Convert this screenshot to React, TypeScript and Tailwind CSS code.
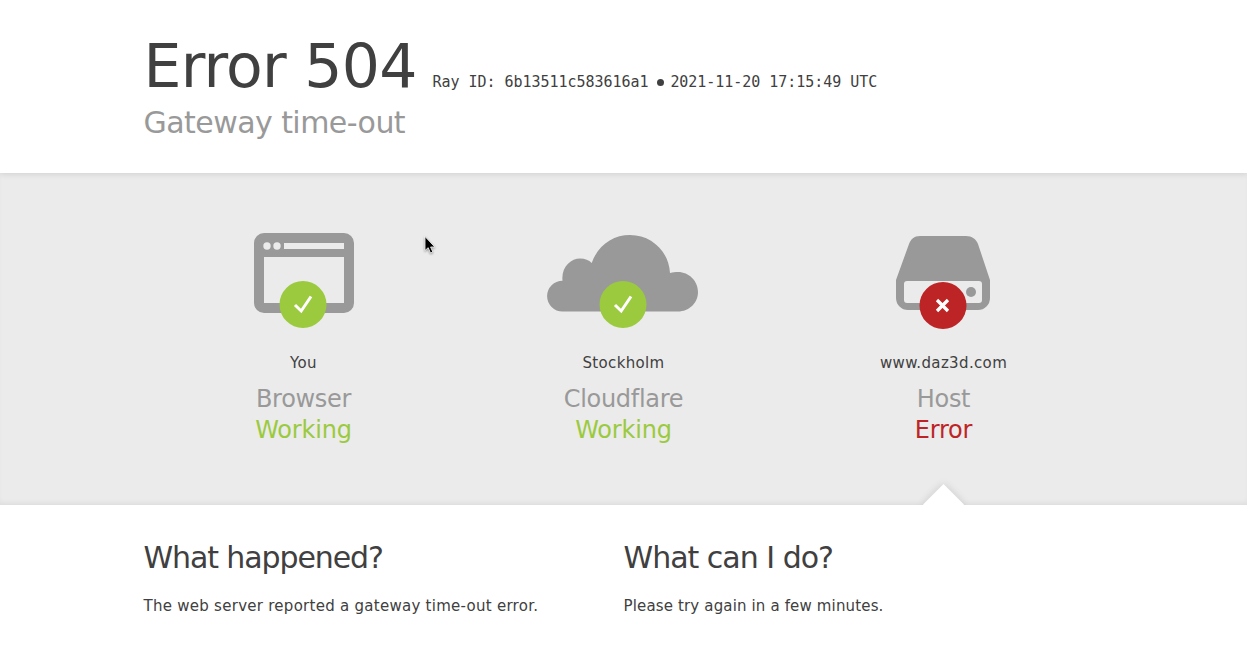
import React from "react";

const sans = "font-['DejaVu_Sans',sans-serif]";

function Badge({ ok }: { ok: boolean }) {
  return (
    <div className={"absolute left-1/2 h-[47px] w-[47px] -translate-x-1/2 rounded-full flex items-center justify-center " + (ok ? "top-[48px] bg-[#9bca3e]" : "top-[49px] bg-[#bd2426]")}>
      <svg width="47" height="47" viewBox="0 0 47 47">
        {ok ? (
          <path d="M15.500 24 L21.700 30 L31.500 15.500" fill="none" stroke="#fff" strokeWidth="3" />
        ) : (
          <path d="M17.500 18 L28.500 29 M28.500 18 L17.500 29" fill="none" stroke="#fff" strokeWidth="3.300" />
        )}
      </svg>
    </div>
  );
}

function BrowserIcon() {
  return (
    <svg className="translate-x-[1px]" width="100" height="80" viewBox="0 0 100 80">
      <path fillRule="evenodd" fill="#999" d="M10 0H90A10 10 0 0 1 100 10V70A10 10 0 0 1 90 80H10A10 10 0 0 1 0 70V10A10 10 0 0 1 10 0ZM10 24V70H90V24Z" />
      <circle cx="13" cy="13" r="3.700" fill="#ebebeb" />
      <circle cx="23" cy="13" r="3.700" fill="#ebebeb" />
      <rect x="30" y="10" width="60" height="6" fill="#ebebeb" />
    </svg>
  );
}

function CloudIcon() {
  return (
    <svg width="151" height="77" viewBox="0 0 151 77">
      <path fill="#999" d="M21 76.500H15.500A15.400 15.400 0 0 1 15.500 45.700C14 32 24 23.500 33 23.500C38 23.500 42 25 44.700 28C51 10 66 0 83 0C105 0 122 17 123 38C126 37 128 37 131 37C142 37 151 46 151 57C151 68 142 76.500 131 76.500Z" />
    </svg>
  );
}

function ServerIcon() {
  return (
    <svg width="94" height="74" viewBox="0 0 94 74">
      <path fillRule="evenodd" fill="#999" d="M24 0H70C76 0 80 3 82 8L94 44V62A12 12 0 0 1 82 74H12A12 12 0 0 1 0 62V44L13 8C15 3 18 0 24 0ZM11 45A3 3 0 0 0 8 48V64A3 3 0 0 0 11 67H83A3 3 0 0 0 86 64V48A3 3 0 0 0 83 45Z" />
      <circle cx="75" cy="56" r="5" fill="#999" />
    </svg>
  );
}

function Column({ icon, place, name, status, ok, iconClass }: { icon: React.ReactNode; place: string; name: string; status: string; ok: boolean; iconClass: string }) {
  return (
    <div className="w-[320px] flex flex-col items-center">
      <div className={"relative flex h-[95px] w-[151px] -translate-x-[1px] justify-center " + iconClass}>
        {icon}
        <Badge ok={ok} />
      </div>
      <div className="mt-[25px] text-[15px] leading-[20px] text-[#404040] tracking-[0.35px]">{place}</div>
      <div className="mt-[11px] text-[24px] leading-[31px] text-[#999] tracking-[-0.3px]">{name}</div>
      <div className={"text-[24px] leading-[31px] tracking-[-0.2px] " + (ok ? "text-[#9bca3e]" : "text-[#bd2426]")}>{status}</div>
    </div>
  );
}

export default function App() {
  return (
    <div className={"relative h-[670px] w-[1247px] overflow-hidden bg-white " + sans}>
      <header className="relative z-10 h-[173px] bg-white shadow-[0_1px_6px_rgba(0,0,0,0.12)]">
        <div className="mx-auto w-[960px] pt-[29px]">
          <div className="flex items-baseline">
            <h1 className="text-[60px] leading-[75px] text-[#404040] tracking-[-0.75px]">Error 504</h1>
            <div className="ml-[16px] flex items-center text-[15px] text-[#404040] tracking-[-0.04px] font-['DejaVu_Sans_Mono',monospace]">
              <span>Ray ID: 6b13511c583616a1</span>
              <span className="ml-[9px] mr-[6px] h-[7px] w-[7px] rounded-full bg-[#404040]" />
              <span>2021-11-20 17:15:49 UTC</span>
            </div>
          </div>
          <h2 className="mt-0 text-[30px] leading-[37px] text-[#999] tracking-[-0.55px]">Gateway time-out</h2>
        </div>
      </header>

      <section className="relative h-[332px] bg-[#ebebeb] shadow-[inset_0_-4px_6px_-3px_rgba(0,0,0,0.08)]">
        <div className="mx-auto flex w-[960px] pt-[60px]">
          <Column icon={<BrowserIcon />} place="You" name="Browser" status="Working" ok iconClass="" />
          <Column icon={<CloudIcon />} place="Stockholm" name="Cloudflare" status="Working" ok iconClass="pt-[2px]" />
          <Column icon={<ServerIcon />} place="www.daz3d.com" name="Host" status="Error" ok={false} iconClass="pt-[3px]" />
        </div>
        <div className="absolute left-[929px] top-[317px] h-[29px] w-[29px] rotate-45 bg-white shadow-[0_0_8px_rgba(0,0,0,0.14)]" />
        <svg className="absolute left-[424px] top-[63px] drop-shadow-[0_1px_1px_rgba(0,0,0,0.4)]" width="12" height="20" viewBox="0 0 12 20">
          <path d="M1 0.500V14.500L4.200 11.700L6.500 17L8.800 16L6.600 11H10.800Z" fill="#000" stroke="#fff" strokeWidth="0.8" />
        </svg>
      </section>

      <section className="relative h-[165px] bg-white">
        <div className="mx-auto flex w-[960px] pt-[33px]">
          <div className="w-[480px]">
            <h2 className="text-[30px] leading-[40px] text-[#404040] tracking-[-1.1px]">What happened?</h2>
            <p className="mt-[18px] text-[15px] leading-[20px] text-[#404040] tracking-[0.27px]">The web server reported a gateway time-out error.</p>
          </div>
          <div className="w-[480px]">
            <h2 className="text-[30px] leading-[40px] text-[#404040] tracking-[-1px]">What can I do?</h2>
            <p className="mt-[18px] text-[15px] leading-[20px] text-[#404040] tracking-[0.15px]">Please try again in a few minutes.</p>
          </div>
        </div>
      </section>
    </div>
  );
}
